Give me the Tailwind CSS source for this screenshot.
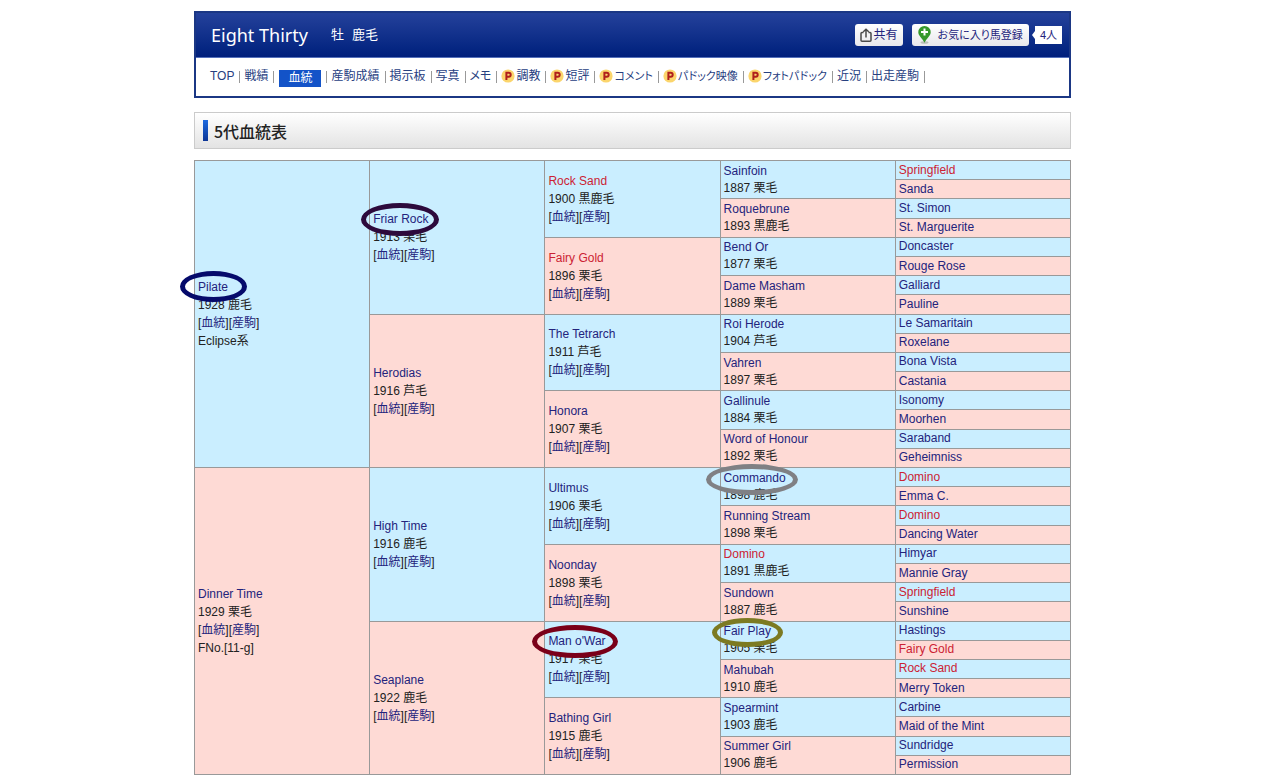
<!DOCTYPE html>
<html lang="ja">
<head>
<meta charset="utf-8">
<title>Eight Thirty - 5代血統表</title>
<script src="https://cdn.jsdelivr.net/npm/@tailwindcss/browser@4"></script>
</head>
<body class="bg-white pr-[15px] font-['Liberation_Sans','Noto_Sans_CJK_JP',sans-serif] text-[12px] leading-[18px] text-[#222] [font-feature-settings:'palt']">
<div class="mx-auto max-w-[877px] pt-[11px]">
  <header class="border-2 border-[#1b3784]">
    <div class="flex h-[45px] items-center border-b border-[#5470bb] bg-linear-to-b from-[#24419b] to-[#001f7c] pr-[7px] pl-[15px] text-white">
      <h1 class="font-['Noto_Sans',sans-serif] text-[18px] leading-[24px]">Eight Thirty</h1>
      <p class="ml-[23px] flex gap-[8px] text-[13px]"><span>牡</span><span>鹿毛</span></p>
      <div class="ml-auto flex items-center text-[#23237c]">
        <button type="button" class="flex h-[22px] items-center gap-[2px] rounded-[3px] bg-linear-to-b from-white to-[#e8e8ec] px-[5px]">
          <svg class="h-[14px] w-[12px]" viewBox="0 0 12 14" fill="none" stroke="#4a4a4a" stroke-width="1.5"><path d="M3.500 4.500H2a1 1 0 0 0-1 1v6.700a1 1 0 0 0 1 1h8a1 1 0 0 0 1-1V5.500a1 1 0 0 0-1-1H8.500M6 9.500V1.500M3.300 3.800L6 1.200l2.700 2.600"/></svg>
          共有
        </button>
        <button type="button" class="ml-[9px] flex h-[22px] items-center rounded-[3px] bg-linear-to-b from-white to-[#e8e8ec] pr-[6px] pl-[6px] text-[11px]">
          <svg class="mr-[7px] h-[18px] w-[13px]" viewBox="0 0 13 18"><ellipse cx="6.500" cy="16.500" rx="4" ry="1.300" fill="#b9bfb9"/><path d="M6.500 0a6.200 6.200 0 0 0-6.200 6.200c0 3.600 3.700 5.600 6.200 10.600 2.500-5 6.200-7 6.200-10.600A6.200 6.200 0 0 0 6.500 0z" fill="#35982b"/><path d="M6.500 2.600v7M3 6.100h7" stroke="#fff" stroke-width="2"/></svg>
          お気に入り馬登録
        </button>
        <svg class="ml-[3px] h-[8px] w-[3px]" viewBox="0 0 3 8"><path d="M3 0v8L0 4z" fill="#fff"/></svg>
        <span class="flex h-[18px] items-center bg-white px-[5px] text-[11px]">4人</span>
      </div>
    </div>
    <nav class="pt-[9px] pb-[10px] pl-[10px]">
      <ul id="menu" class="flex h-[19px] items-start whitespace-nowrap text-[#27407f]"></ul>
    </nav>
  </header>

  <div class="mt-[14px] flex h-[37px] items-center border border-[#cbcbcb] bg-linear-to-b from-white to-[#e3e3e3] pl-[8px]">
    <span class="h-[21px] w-[5px] bg-linear-to-b from-[#1d6ae0] to-[#0c3596]"></span>
    <h2 class="ml-[6px] font-['Noto_Sans_CJK_JP',sans-serif] text-[16px] font-medium text-[#222]">5代血統表</h2>
  </div>

  <table class="mt-[11px] h-[615px] w-full table-fixed border-collapse" aria-label="5代血統表">
    <tbody id="pedigree"></tbody>
  </table>
</div>

<script>
const P = '<svg class="mr-[1px] h-[14px] w-[14px]" viewBox="0 0 14 14"><circle cx="7" cy="7" r="6.600" fill="#fbd56c"/><path d="M5.400 11V3.700h2.300a2 2 0 0 1 0 4H5.400" fill="none" stroke="#b0201c" stroke-width="2"/></svg>';
const menu = ['TOP','戦績','*血統','産駒成績','掲示板','写真','メモ','P調教','P短評','Pコメント','Pパドック映像','Pフォトパドック','近況','出走産駒'];
document.getElementById('menu').innerHTML = menu.map(m => {
  if (m[0] === '*') return `<li class="flex items-start pl-[5px]"><a href="#" class="mt-[3px] block h-[17px] bg-[#1353c8] px-[9px] leading-[17px] text-white">${m.slice(1)}</a><span class="mt-[4px] ml-[5px] h-[12px] w-px bg-[#999]"></span></li>`;
  const icon = m[0] === 'P', size = m.length > 4 ? 'text-[11px]' : 'text-[12px]';
  return `<li class="flex items-start pl-[4px]"><a href="#" class="flex items-center ${size}">${icon ? P + m.slice(1) : m}</a><span class="mt-[4px] ml-[5px] h-[12px] w-px bg-[#999]"></span></li>`;
}).join('');

// Each generation from sire line to dam line: name, year and coat; "!" marks an inbred ancestor.
const gens = [
  ['Pilate|1928 鹿毛|Eclipse系','Dinner Time|1929 栗毛|FNo.[11-g]'],
  ['Friar Rock|1913 栗毛','Herodias|1916 芦毛','High Time|1916 鹿毛','Seaplane|1922 鹿毛'],
  ['!Rock Sand|1900 黒鹿毛','!Fairy Gold|1896 栗毛','The Tetrarch|1911 芦毛','Honora|1907 栗毛','Ultimus|1906 栗毛','Noonday|1898 栗毛',"Man o'War|1917 栗毛",'Bathing Girl|1915 鹿毛'],
  ['Sainfoin|1887 栗毛','Roquebrune|1893 黒鹿毛','Bend Or|1877 栗毛','Dame Masham|1889 栗毛','Roi Herode|1904 芦毛','Vahren|1897 栗毛','Gallinule|1884 栗毛','Word of Honour|1892 栗毛','Commando|1898 鹿毛','Running Stream|1898 栗毛','!Domino|1891 黒鹿毛','Sundown|1887 鹿毛','Fair Play|1905 栗毛','Mahubah|1910 鹿毛','Spearmint|1903 鹿毛','Summer Girl|1906 鹿毛'],
  ['!Springfield','Sanda','St. Simon','St. Marguerite','Doncaster','Rouge Rose','Galliard','Pauline','Le Samaritain','Roxelane','Bona Vista','Castania','Isonomy','Moorhen','Saraband','Geheimniss','!Domino','Emma C.','!Domino','Dancing Water','Himyar','Mannie Gray','!Springfield','Sunshine','Hastings','!Fairy Gold','!Rock Sand','Merry Token','Carbine','Maid of the Mint','Sundridge','Permission']
];
const rings = {
  'Pilate': 'left-[-18px] top-[-7px] h-[31px] w-[67px] border-[#050a6b]',
  'Friar Rock': 'left-[-12px] top-[-7px] h-[33px] w-[78px] border-[#2d0a3c]',
  "Man o'War": 'left-[-16px] top-[-7px] h-[33px] w-[86px] border-[#7a0019]',
  'Commando': 'left-[-18px] top-[-6px] h-[31px] w-[92px] border-[#808084]',
  'Fair Play': 'left-[-12px] top-[-5px] h-[29px] w-[71px] border-[#7c7a22]'
};
const leading = ['leading-[18px]','leading-[18px]','leading-[18px]','leading-[17px]','leading-[17px]'];
function cell(g, i) {
  const [raw, year, extra] = gens[g][i].split('|');
  const red = raw[0] === '!', name = red ? raw.slice(1) : raw;
  const ring = rings[name] ? `<span class="pointer-events-none absolute rounded-[50%] border-5 ${rings[name]}"></span>` : '';
  let h = `<div class="relative"><a href="#" class="${red ? 'text-[#cc2233]' : 'text-[#23237c]'}">${name}</a>${ring}</div>`;
  if (year) h += `<div>${year}</div>`;
  if (g < 3) h += '<div>[<a href="#" class="text-[#23237c]">血統</a>][<a href="#" class="text-[#23237c]">産駒</a>]</div>';
  if (extra) h += `<div>${extra}</div>`;
  return `<td rowspan="${32 >> (g + 1)}" class="border border-[#999] py-0 pr-0 pl-[3px] align-middle whitespace-nowrap ${leading[g]} ${i % 2 ? 'bg-[#fedad5]' : 'bg-[#caeeff]'}">${h}</td>`;
}
let rows = '';
for (let r = 0; r < 32; r++) {
  rows += '<tr class="h-[19px]">';
  for (let g = 0; g < 5; g++) {
    const span = 32 >> (g + 1);
    if (r % span === 0) rows += cell(g, r / span);
  }
  rows += '</tr>';
}
document.getElementById('pedigree').innerHTML = rows;
</script>
</body>
</html>
